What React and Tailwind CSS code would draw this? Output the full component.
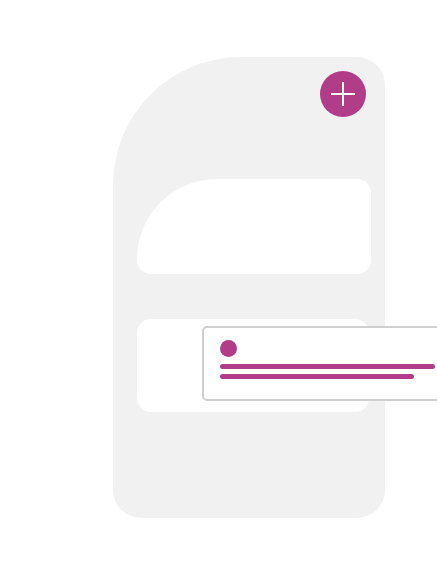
export default function App() {
  return (
    <div className="relative w-[437px] h-[580px] overflow-hidden bg-white" style={{ fontFamily: '"Liberation Sans", sans-serif' }}>
      <div className="pt-[57px] pl-[113px]">
        <div className="flex flex-col w-[272px] h-[461px] bg-[#f1f1f1] rounded-tl-[128px] rounded-tr-[28px] rounded-b-[28px]">
          <button className="self-end mt-[14px] mr-[19px] w-[46px] h-[46px] rounded-full bg-[#b13c87] flex items-center justify-center">
            <svg width="26" height="26" viewBox="0 0 26 26">
              <path d="M13 1v24M1 13h24" stroke="white" strokeWidth="2" />
            </svg>
          </button>
          <div className="mt-[62px] ml-[24px] w-[234px] h-[95px] bg-white rounded-tl-[80px] rounded-tr-[14px] rounded-b-[14px]" />
          <div className="mt-[45px] ml-[24px] w-[232px] h-[93px] bg-white rounded-[14px]" />
        </div>
      </div>
      <div className="absolute left-[202px] top-[326px] w-[260px] h-[75px] bg-white border-2 border-[#cfcfcf] rounded-[5px] flex flex-col pl-[16px] pt-[12px]">
        <div className="w-[17px] h-[17px] rounded-full bg-[#b13c87]" />
        <div className="mt-[7px] w-[215px] h-[5px] rounded-full bg-[#b13c87]" />
        <div className="mt-[5px] w-[194px] h-[5px] rounded-full bg-[#b13c87]" />
      </div>
    </div>
  );
}
